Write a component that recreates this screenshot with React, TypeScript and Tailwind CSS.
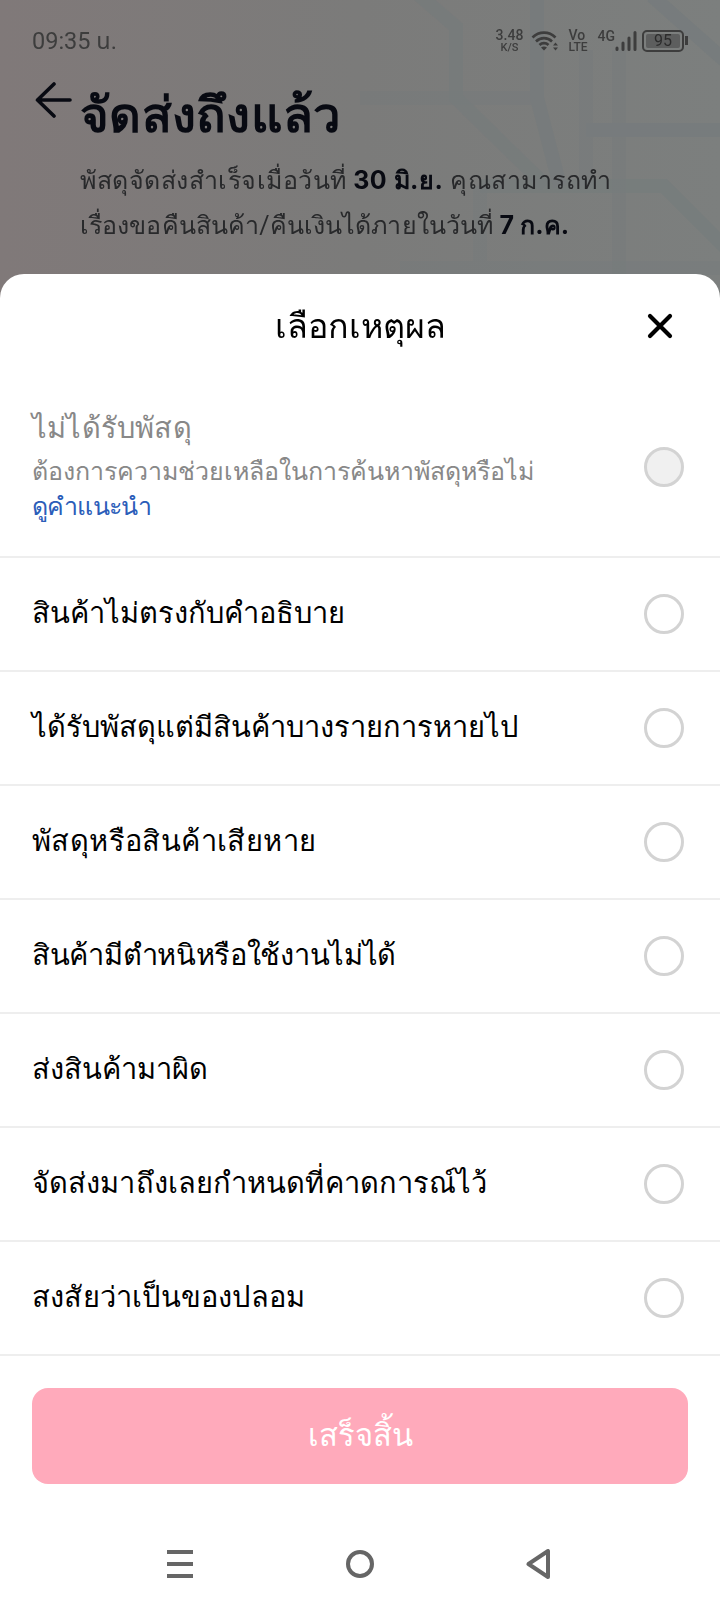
import React from 'react';
import { clsx } from 'clsx';

interface Reason {
  id: string;
  label: string;
  tracking?: string;
}

interface RadioProps {
  disabled?: boolean;
}

const REASONS: Reason[] = [
  { id: 'not-as-described', label: 'สินค้าไม่ตรงกับคำอธิบาย' },
  { id: 'missing-items', label: 'ได้รับพัสดุแต่มีสินค้าบางรายการหายไป' },
  { id: 'damaged', label: 'พัสดุหรือสินค้าเสียหาย', tracking: 'tracking-[0.4px]' },
  { id: 'defective', label: 'สินค้ามีตำหนิหรือใช้งานไม่ได้', tracking: 'tracking-[-0.3px]' },
  { id: 'wrong-item', label: 'ส่งสินค้ามาผิด' },
  { id: 'late', label: 'จัดส่งมาถึงเลยกำหนดที่คาดการณ์ไว้', tracking: 'tracking-[0.1px]' },
  { id: 'counterfeit', label: 'สงสัยว่าเป็นของปลอม', tracking: 'tracking-[0.2px]' },
];

const Radio: React.FC<RadioProps> = ({ disabled = false }) => (
  <span
    className={clsx(
      'size-10 shrink-0 rounded-full border-3 border-[#d3d3d3]',
      disabled && 'bg-[#f0f0f0]'
    )}
  />
);

const MapBackdrop: React.FC = () => (
  <svg className="absolute inset-0 h-full w-full" viewBox="0 0 720 298" fill="none" aria-hidden="true">
    <g stroke="#727a7d" strokeWidth="14" opacity="0.45">
      <path d="M418 -6 L456 27 V98 L546 186" opacity="0.8" />
      <path d="M360 98 H538" opacity="0.6" />
      <path d="M537 0 V98 L560 186" />
      <path d="M586 50 V186 M619 50 V300" opacity="0.6" />
      <path d="M586 130 H720" />
      <path d="M652 -4 L724 60" />
      <path d="M480 186 H664 L726 248" opacity="0.8" />
      <path d="M480 186 V268 M400 268 H720" opacity="0.5" />
    </g>
  </svg>
);

const StatusBar: React.FC = () => (
  <div className="relative flex h-20 items-center justify-between pl-8 pr-8 pt-px text-[#3d3d3d]">
    <span className="pt-[3px] font-['Roboto','Noto_Sans_Thai',sans-serif] text-[23.500px] leading-none">09:35 น.</span>
    <div className="flex items-center">
      <div className="flex w-[28px] flex-col items-center font-medium">
        <span className="text-[14px] leading-[14px]">3.48</span>
        <span className="text-[11px] leading-[11px]">K/S</span>
      </div>
      <svg className="ml-[7px]" width="28" height="22" viewBox="0 0 28 22" fill="none">
        <g stroke="currentColor" strokeWidth="2.6">
          <path d="M1.5 7.5 C8 1 18 1 24.500 7.500" />
          <path d="M5 11.500 C9.500 7 16.500 7 21 11.500" />
          <path d="M8.500 15 C11 12.500 15 12.500 17.500 15" />
        </g>
        <path d="M10 17.500 Q13 15.500 16 17.500 L13 20.500 Z M22 15.500 L24.500 12.500 L27 15.500 Z M22 17.500 L24.500 20.500 L27 17.500 Z" fill="currentColor" />
      </svg>
      <div className="ml-[10px] flex w-[24px] flex-col font-medium">
        <span className="text-[14px] leading-[12px]">Vo</span>
        <span className="text-[12px] leading-[12px]">LTE</span>
      </div>
      <div className="ml-[5px] flex">
        <span className="text-[14px] font-medium leading-[13px]">4G</span>
        <svg width="22" height="22" viewBox="0 0 22 22" stroke="currentColor" strokeWidth="3" strokeLinecap="round">
          <path d="M2 18 V19.500 M8 13 V19.500 M14 8 V19.500 M20 2.500 V19.500" />
        </svg>
      </div>
      <div className="ml-[5px] flex h-[22px] w-[42px] items-center rounded-[5px] border-2 border-[#3d3d3d] p-[2px]">
        <span className="flex h-full w-[34px] items-center justify-center rounded-[2px] bg-[#5d5e5e] text-[16px] leading-none text-[#2c2c2c]">
          95
        </span>
      </div>
      <span className="ml-[1px] h-[9px] w-[3px] bg-[#3d3d3d]" />
    </div>
  </div>
);

const OrderHeader: React.FC = () => (
  <header className="relative h-[298px] bg-linear-to-r from-[#807979] via-[#7b7b7a] to-[#7c7f7e]">
    <MapBackdrop />
    <StatusBar />
    <div className="relative flex pl-[35px]">
      <svg className="mt-px shrink-0" width="37" height="38" viewBox="0 0 37 38" fill="none" stroke="#080a12" strokeWidth="3.600" strokeLinecap="round" strokeLinejoin="round">
        <path d="M19 3 L2.500 19 L19 35 M2.500 19 H35" />
      </svg>
      <div className="pl-[8px]">
        <h1 className="mt-1 whitespace-nowrap text-[49px] font-bold leading-[64px] tracking-[0.3px] text-[#080a12]">จัดส่งถึงแล้ว</h1>
        <div className="mt-[10px] whitespace-nowrap text-[25px] leading-[44px] text-[#28292b]">
          <p className="tracking-[0.5px]">
            พัสดุจัดส่งสำเร็จเมื่อวันที่ <b className="font-['Inter',sans-serif] text-[#080a12]">30 มิ.ย.</b> คุณสามารถทำ
          </p>
          <p className="tracking-[0.1px]">
            เรื่องขอคืนสินค้า/คืนเงินได้ภายในวันที่ <b className="font-['Inter',sans-serif] text-[#080a12]">7 ก.ค.</b>
          </p>
        </div>
      </div>
    </div>
  </header>
);

const NavigationBar: React.FC = () => (
  <nav className="flex items-center justify-between pl-[166px] pr-[168px] pt-[65px] text-[#666666]">
    <svg width="28" height="30" viewBox="0 0 28 30" fill="currentColor">
      <path d="M1 1 H27 V5 H1 Z M1 13 H27 V17 H1 Z M1 25 H27 V29 H1 Z" />
    </svg>
    <svg width="30" height="30" viewBox="0 0 30 30" fill="none" stroke="currentColor" strokeWidth="4">
      <circle cx="15" cy="15" r="12" />
    </svg>
    <svg width="26" height="30" viewBox="0 0 26 30" fill="none" stroke="currentColor" strokeWidth="4" strokeLinejoin="round">
      <path d="M22 2 V28 L2.500 15 Z" />
    </svg>
  </nav>
);

const App: React.FC = () => {
  return (
    <div className="h-[1612px] w-[720px] overflow-hidden bg-white font-['Roboto',sans-serif]">
      <OrderHeader />

      <section className="relative -mt-6 h-[1338px] rounded-t-[24px] bg-white text-black">
        <div className="relative flex h-[104px] items-center justify-center">
          <h2 className="text-[34px] leading-none">เลือกเหตุผล</h2>
          <button className="absolute right-[46px] top-[38px]" aria-label="ปิด">
            <svg width="28" height="28" viewBox="0 0 28 28" stroke="currentColor" strokeWidth="4.200" strokeLinecap="round">
              <path d="M4 4 L24 24 M24 4 L4 24" />
            </svg>
          </button>
        </div>

        <div className="flex h-[180px] items-center justify-between border-b-2 border-[#eeeeee] pl-8 pr-9 text-[#888888]">
          <div className="-mt-[6px] whitespace-nowrap">
            <p className="pb-[2px] text-[29px] leading-[48px] tracking-[0.2px]">ไม่ได้รับพัสดุ</p>
            <p className="text-[25px] leading-[35px]">ต้องการความช่วยเหลือในการค้นหาพัสดุหรือไม่</p>
            <a className="block text-[25px] leading-[35px] tracking-[-0.8px] text-[#2b5db9]">ดูคำแนะนำ</a>
          </div>
          <Radio disabled />
        </div>

        {REASONS.map((reason) => (
          <div key={reason.id} className="flex h-[114px] items-center justify-between border-b-2 border-[#eeeeee] pl-8 pr-9">
            <span className={clsx('whitespace-nowrap pb-[2px] text-[29px] leading-none', reason.tracking)}>
              {reason.label}
            </span>
            <Radio />
          </div>
        ))}

        <div className="px-8 pt-8">
          <button className="flex h-24 w-full items-center justify-center rounded-[16px] bg-[#ffaabb] text-[31px] text-white">
            เสร็จสิ้น
          </button>
        </div>

        <NavigationBar />
      </section>
    </div>
  );
};

export default App;
